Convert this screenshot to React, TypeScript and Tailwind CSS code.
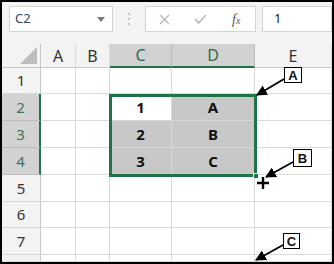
import React from "react";

function Toolbar() {
  return (
    <div className="flex h-[42px] items-start bg-[#f3f3f3] pl-[7px] pt-[4px]">
      <div className="flex h-[26px] w-[104px] items-center justify-between border border-[#d4d4d4] bg-white pl-[5px] pr-[7px]">
        <span className="text-[13px] text-[#3c4a5c]">C2</span>
        <svg width="8" height="5" viewBox="0 0 8 5">
          <path d="M0 0 H8 L4 5 Z" fill="#7a7a7a" />
        </svg>
      </div>
      <div className="flex h-[26px] w-[32px] flex-col items-center justify-center gap-[3px]">
        <span className="h-[2px] w-[2px] bg-[#c4c4c4]" />
        <span className="h-[2px] w-[2px] bg-[#c4c4c4]" />
        <span className="h-[2px] w-[2px] bg-[#c4c4c4]" />
      </div>
      <div className="flex h-[26px] w-[111px] items-center border border-[#d4d4d4] bg-white">
        <svg className="ml-[13px]" width="11" height="11" viewBox="0 0 11 11">
          <path d="M1 1 L10 10 M10 1 L1 10" stroke="#b4b4b4" strokeWidth="1.3" />
        </svg>
        <svg className="ml-[24px]" width="13" height="10" viewBox="0 0 13 10">
          <path d="M1 5 L4.5 9 L12 1" stroke="#b4b4b4" strokeWidth="1.4" fill="none" />
        </svg>
        <span className="ml-[25px] font-['Liberation_Serif',serif] text-[14px] italic text-[#555]">
          f<span className="text-[10px]">x</span>
        </span>
      </div>
      <div className="ml-[6px] flex h-[26px] flex-1 items-center border border-[#d4d4d4] bg-white pl-[11px]">
        <span className="text-[13px] text-[#222]">1</span>
      </div>
    </div>
  );
}

const cols = ["A", "B", "C", "D", "E"];
const selCols = ["C", "D"];
const rows = [1, 2, 3, 4, 5, 6, 7, 8];
const selRows = [2, 3, 4];
const values: Record<string, string> = {
  C2: "1",
  D2: "A",
  C3: "2",
  D3: "B",
  C4: "3",
  D4: "C",
};

function Sheet() {
  return (
    <div className="relative">
      <div className="grid grid-cols-[39px_35px_34px_62px_83px_77px] grid-rows-[24px_26px_27px_27px_27px_27px_26px_27px_7px]">
        <div className="flex items-end justify-end border-r border-b border-[#c8c8c8] bg-[#f3f3f3] pr-[3px] pb-[3px]">
          <svg width="17" height="17" viewBox="0 0 17 17">
            <path d="M17 0 V17 H0 Z" fill="#bdbdbd" />
          </svg>
        </div>
        {cols.map((c) =>
          selCols.includes(c) ? (
            <div
              key={c}
              className="flex items-center justify-center border-r border-b-2 border-r-[#bdbdbd] border-b-[#217346] bg-[#d2d2d2] text-[16px] text-[#2e6b4a]"
            >
              {c}
            </div>
          ) : (
            <div
              key={c}
              className="flex items-center justify-center border-r border-b border-r-[#dadada] border-b-[#c8c8c8] bg-[#f3f3f3] text-[16px] text-[#333]"
            >
              {c}
            </div>
          )
        )}
        {rows.map((r) => (
          <React.Fragment key={r}>
            {selRows.includes(r) ? (
              <div className="flex items-center justify-center border-r-2 border-b border-r-[#217346] border-b-[#bdbdbd] bg-[#d2d2d2] text-[15px] text-[#3d7259]">
                {r}
              </div>
            ) : (
              <div className="flex items-center justify-center border-r border-b border-r-[#c8c8c8] border-b-[#dadada] bg-[#f3f3f3] text-[15px] text-[#333]">
                {r < 8 ? r : ""}
              </div>
            )}
            {cols.map((c) => {
              const id = c + r;
              const filled = id in values && id !== "C2";
              return (
                <div
                  key={id}
                  className={
                    "flex items-center justify-center border-r border-b text-[15px] font-bold text-[#111] " +
                    (filled ? "border-[#d8d8d8] bg-[#c8c8c8]" : "border-[#dadada] bg-white")
                  }
                >
                  {values[id] ?? ""}
                </div>
              );
            })}
          </React.Fragment>
        ))}
      </div>
      <div className="pointer-events-none absolute left-[107px] top-[50px] h-[83px] w-[148px] border-[3px] border-[#217346]">
        <div className="absolute -right-[5px] -bottom-[5px] h-[6px] w-[6px] border border-white bg-[#217346]" />
      </div>
    </div>
  );
}

function Callout({ label, className }: { label: string; className: string }) {
  return (
    <div
      className={
        "absolute flex items-center justify-center border-[1.5px] border-black bg-white font-['Liberation_Sans',sans-serif] text-[13px] font-bold leading-none text-[#111] " +
        className
      }
    >
      {label}
    </div>
  );
}

function Callouts() {
  return (
    <>
      <svg className="pointer-events-none absolute left-[-2px] top-[-2px]" width="334" height="264" viewBox="0 0 334 264">
        <defs>
          <marker id="head" viewBox="0 0 10 10" refX="9" refY="5" markerWidth="6" markerHeight="6" orient="auto">
            <path d="M0 0 L10 5 L0 10 Z" fill="#000" />
          </marker>
        </defs>
        <line x1="284" y1="79" x2="257" y2="95" stroke="#000" strokeWidth="1.8" markerEnd="url(#head)" />
        <line x1="293" y1="162" x2="266" y2="177" stroke="#000" strokeWidth="1.8" markerEnd="url(#head)" />
        <line x1="283" y1="245" x2="256" y2="260" stroke="#000" strokeWidth="1.8" markerEnd="url(#head)" />
        <path d="M257 183 H269 M263 177 V189" stroke="#fff" strokeWidth="5" />
        <path d="M257 183 H269 M263 177 V189" stroke="#000" strokeWidth="2.4" />
      </svg>
      <Callout label="A" className="left-[282px] top-[65px] h-[16px] w-[18px]" />
      <Callout label="B" className="left-[291px] top-[147px] h-[18px] w-[19px]" />
      <Callout label="C" className="left-[281px] top-[231px] h-[16px] w-[17px]" />
    </>
  );
}

export default function App() {
  return (
    <div className="relative h-[264px] w-[334px] overflow-hidden border-2 border-black bg-white font-['Noto_Sans',sans-serif]">
      <Toolbar />
      <Sheet />
      <Callouts />
    </div>
  );
}
